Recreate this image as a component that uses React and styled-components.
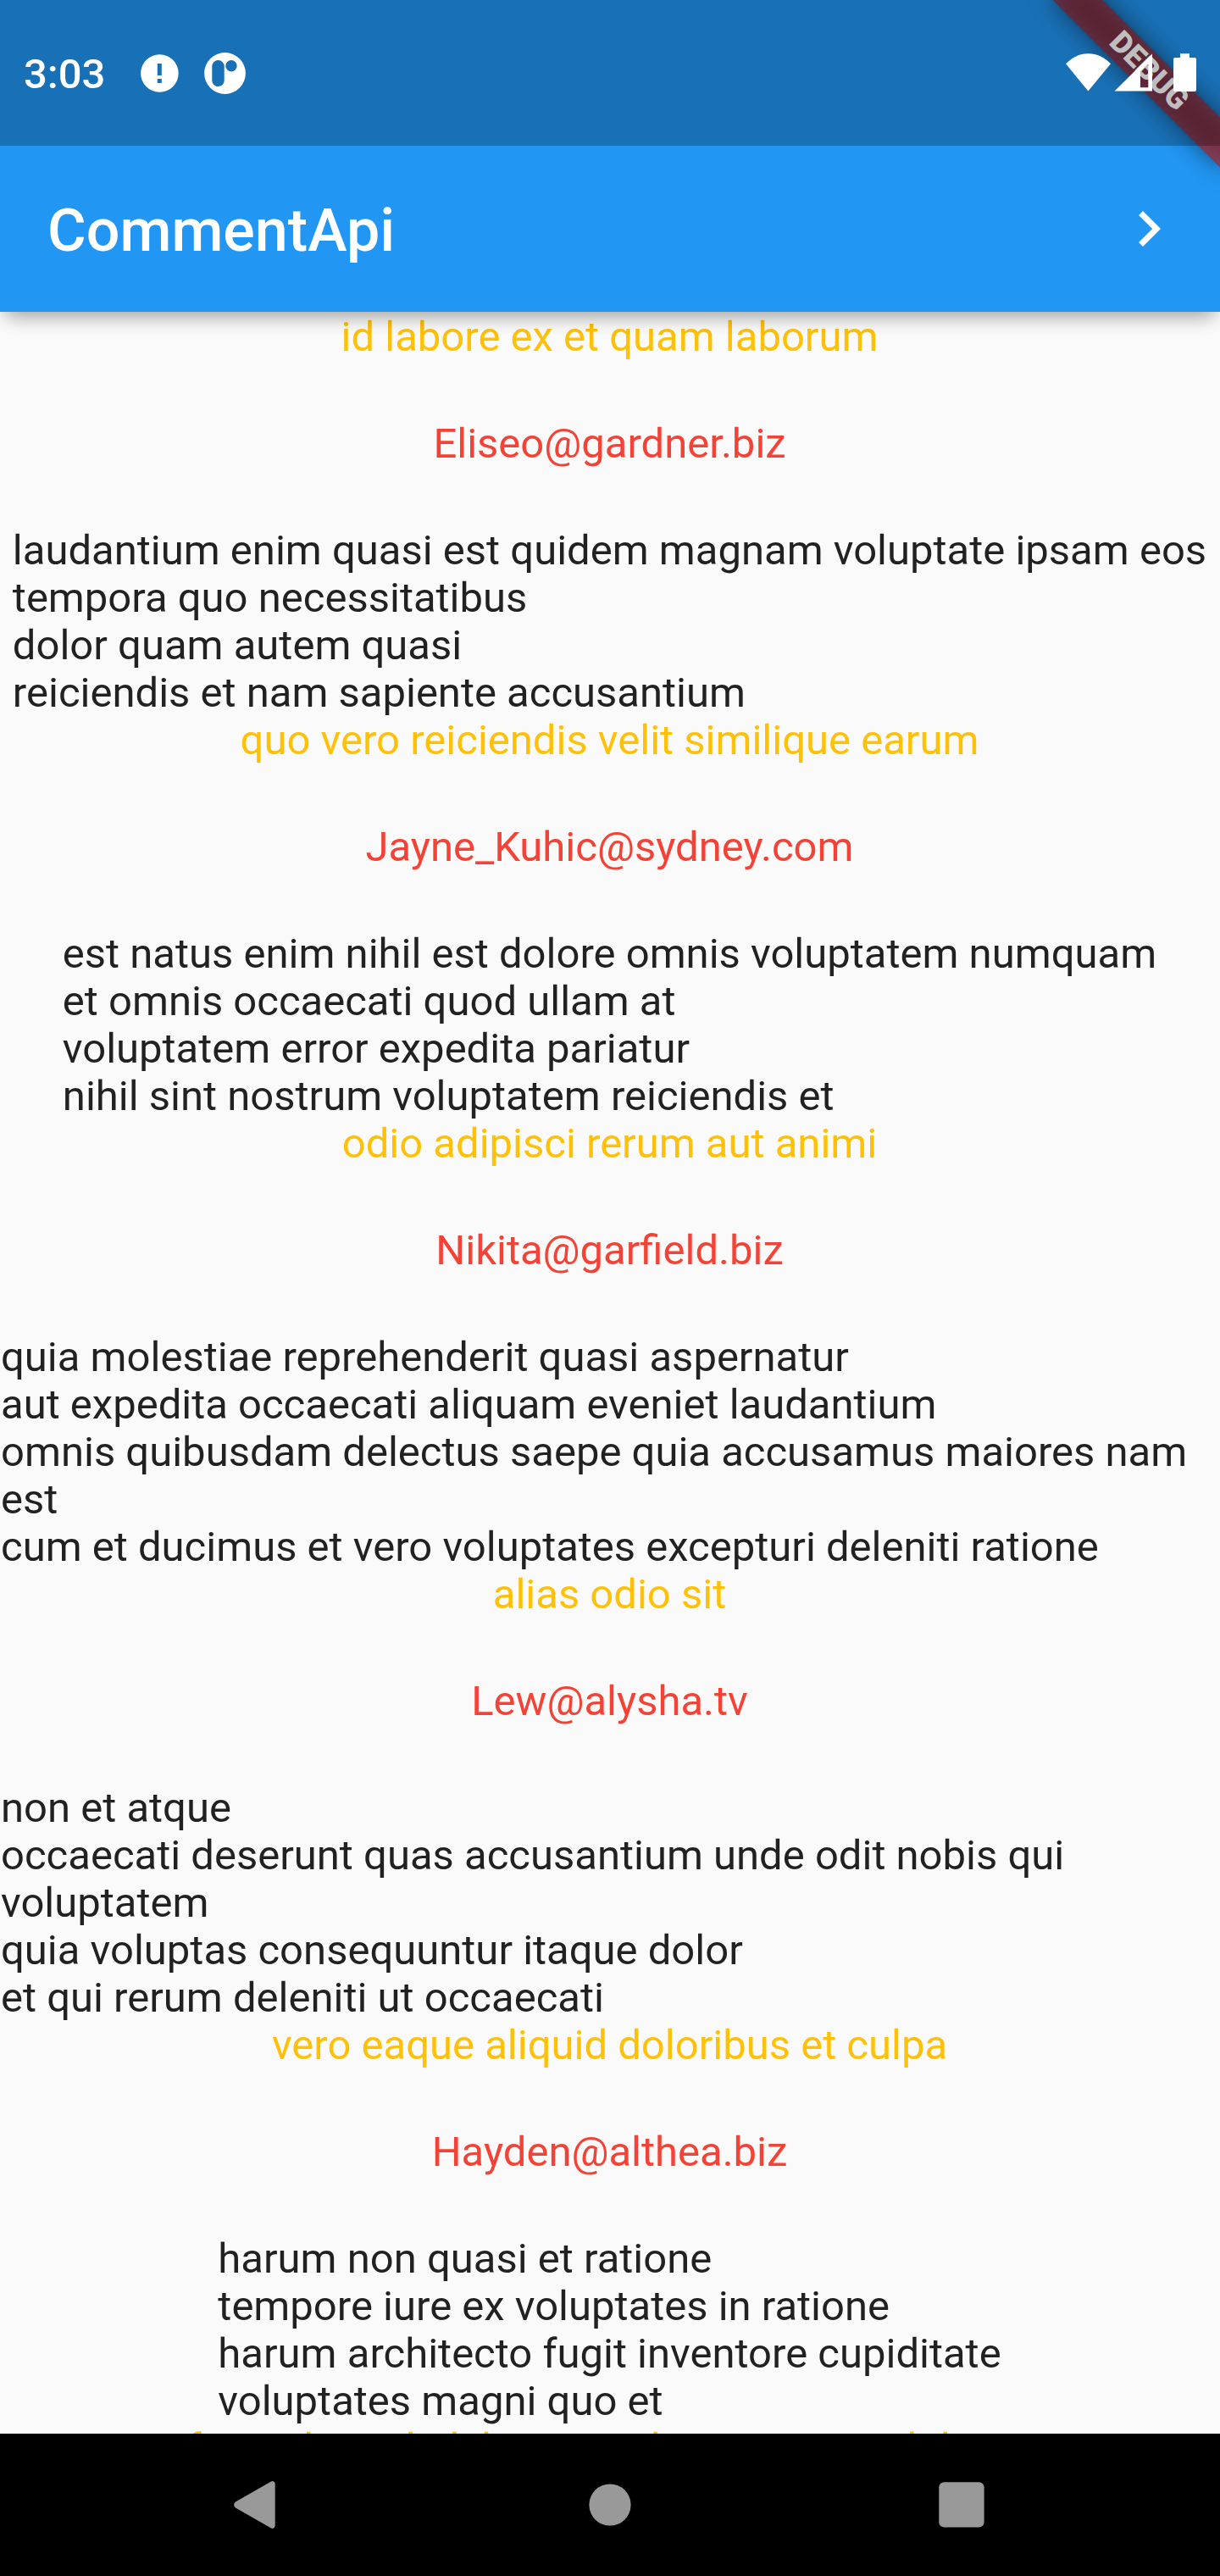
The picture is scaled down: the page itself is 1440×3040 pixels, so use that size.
import React from "react";
import styled, { createGlobalStyle } from "styled-components";

const GlobalStyle = createGlobalStyle`
  body {
    margin: 0;
    background: #fafafa;
    font-family: Roboto, "Liberation Sans", sans-serif;
  }
`;

const Screen = styled.div`
  display: flex;
  flex-direction: column;
  width: 1440px;
  height: 3040px;
  overflow: hidden;
  background: #fafafa;
`;

const Header = styled.header`
  position: relative;
  z-index: 1;
  flex: none;
  background: #2196f3;
  box-shadow: 0 14px 20px -8px rgba(0, 0, 0, 0.22), 0 8px 24px -6px rgba(0, 0, 0, 0.2);
`;

const StatusBar = styled.div`
  position: relative;
  z-index: 2;
  display: flex;
  align-items: center;
  justify-content: space-between;
  box-sizing: border-box;
  height: 172px;
  padding: 0 28px;
  background: rgba(0, 0, 0, 0.251);
  color: #fff;
`;

const StatusGroup = styled.div`
  display: flex;
  align-items: center;
  gap: ${(p) => p.$gap}px;
`;

const Clock = styled.span`
  width: 108px;
  padding-top: 4px;
  font-size: 49px;
  font-weight: 500;
  line-height: 56px;
  white-space: nowrap;
`;

const Glyph = styled.svg`
  display: block;
  flex: none;
`;

const DebugBanner = styled.div`
  position: absolute;
  z-index: 1;
  top: 63.15px;
  right: -55.85px;
  width: 280px;
  height: 42px;
  transform: rotate(45deg);

  &::before {
    content: "";
    position: absolute;
    inset: 0;
    background: rgba(0, 0, 0, 0.5);
    filter: blur(13.9px);
  }
`;

const DebugLabel = styled.div`
  position: relative;
  height: 42px;
  background: rgba(183, 28, 28, 0.627);
  color: #fff;
  font-size: 35.7px;
  font-weight: 900;
  line-height: 40px;
  text-align: center;
`;

const AppBar = styled.div`
  display: flex;
  align-items: center;
  justify-content: space-between;
  height: 196px;
  padding-left: 56px;
  color: #fff;
`;

const Title = styled.h1`
  margin: 0;
  padding-top: 4px;
  font-size: 70px;
  font-weight: 500;
  line-height: 82px;
`;

const IconButton = styled.button`
  display: flex;
  align-items: center;
  justify-content: center;
  width: 168px;
  height: 168px;
  padding: 0;
  border: 0;
  background: none;
  color: inherit;
`;

const CommentList = styled.main`
  flex: 1;
  min-height: 0;
  padding: 2px 1px 0 0;
  overflow: hidden;
  font-size: 49px;
  line-height: 56px;
`;

const Comment = styled.article`
  display: flex;
  flex-direction: column;
  align-items: center;
`;

const Name = styled.div`
  color: #ffc107;
  white-space: nowrap;
`;

const Email = styled.div`
  margin: 70px 0;
  color: #f44336;
`;

const Body = styled.div`
  max-width: 1437px;
  color: rgba(0, 0, 0, 0.87);
  white-space: pre-line;
`;

const NavBar = styled.nav`
  display: grid;
  grid-template-columns: 84px 84px 84px;
  justify-content: center;
  align-items: center;
  column-gap: 331px;
  flex: none;
  height: 168px;
  background: #000;
  color: #999;
`;

const comments = [
  {
    name: "id labore ex et quam laborum",
    email: "Eliseo@gardner.biz",
    body: "laudantium enim quasi est quidem magnam voluptate ipsam eos\ntempora quo necessitatibus\ndolor quam autem quasi\nreiciendis et nam sapiente accusantium",
  },
  {
    name: "quo vero reiciendis velit similique earum",
    email: "Jayne_Kuhic@sydney.com",
    body: "est natus enim nihil est dolore omnis voluptatem numquam\net omnis occaecati quod ullam at\nvoluptatem error expedita pariatur\nnihil sint nostrum voluptatem reiciendis et",
  },
  {
    name: "odio adipisci rerum aut animi",
    email: "Nikita@garfield.biz",
    body: "quia molestiae reprehenderit quasi aspernatur\naut expedita occaecati aliquam eveniet laudantium\nomnis quibusdam delectus saepe quia accusamus maiores nam est\ncum et ducimus et vero voluptates excepturi deleniti ratione",
  },
  {
    name: "alias odio sit",
    email: "Lew@alysha.tv",
    body: "non et atque\noccaecati deserunt quas accusantium unde odit nobis qui voluptatem\nquia voluptas consequuntur itaque dolor\net qui rerum deleniti ut occaecati",
  },
  {
    name: "vero eaque aliquid doloribus et culpa",
    email: "Hayden@althea.biz",
    body: "harum non quasi et ratione\ntempore iure ex voluptates in ratione\nharum architecto fugit inventore cupiditate\nvoluptates magni quo et",
  },
  { name: "et fugit eligendi deleniti quidem qui sint nihil autem" },
];

const AlertIcon = () => (
  <Glyph width="45" height="45" viewBox="0 0 45 45">
    <path
      fill="currentColor"
      fillRule="evenodd"
      d="M22.4 0.2a22.3 22.3 0 1 0 0 44.6a22.3 22.3 0 1 0 0-44.6zM19.8 11h5v14h-5zM19.8 29h5v5h-5z"
    />
  </Glyph>
);

const AppIcon = () => (
  <Glyph width="49" height="49" viewBox="0 0 49 49">
    <path
      fill="currentColor"
      fillRule="evenodd"
      d="M24.5 0.1a24.4 24.4 0 1 0 0 48.8a24.4 24.4 0 1 0 0-48.8zM9.3 16.3a7.2 7.2 0 0 1 14.4 0v16.6a7.2 7.2 0 0 1-14.4 0zM32 9a6.7 6.7 0 1 1 0 13.4a6.7 6.7 0 1 1 0-13.4z"
    />
  </Glyph>
);

const StatusIcons = () => (
  <Glyph width="154" height="46" viewBox="0 0 154 46">
    <g fill="currentColor">
      <path d="M26.4 44.5L0 12.3C7 5 16 0.3 26.4 0.3S46 5 53 12.3z" />
      <path fillRule="evenodd" d="M102 0.5V44.6H57.5zM97.3 12L88 21.3V40.3h9.3z" />
      <path d="M135 0.3h11v4.8h6a2 2 0 0 1 2 2v36a2 2 0 0 1-2 2h-23a2 2 0 0 1-2-2v-36a2 2 0 0 1 2-2h6z" />
    </g>
  </Glyph>
);

export default function App() {
  return (
    <Screen>
      <GlobalStyle />
      <Header>
        <StatusBar>
          <StatusGroup $gap={30}>
            <Clock>3:03</Clock>
            <AlertIcon />
            <AppIcon />
          </StatusGroup>
          <StatusIcons />
        </StatusBar>
        <AppBar>
          <Title>CommentApi</Title>
          <IconButton aria-label="Next">
            <Glyph width="84" height="84" viewBox="0 0 24 24">
              <path fill="currentColor" d="M10 6L8.59 7.41 13.17 12l-4.58 4.59L10 18l6-6z" />
            </Glyph>
          </IconButton>
        </AppBar>
        <DebugBanner>
          <DebugLabel>DEBUG</DebugLabel>
        </DebugBanner>
      </Header>
      <CommentList>
        {comments.map((c) => (
          <Comment key={c.name}>
            <Name>{c.name}</Name>
            {c.email && <Email>{c.email}</Email>}
            {c.body && <Body>{c.body}</Body>}
          </Comment>
        ))}
      </CommentList>
      <NavBar>
        <Glyph width="84" height="84" viewBox="0 0 84 84">
          <path
            fill="currentColor"
            d="M15 38.6L57 14.6a3.1 3.1 0 0 1 4.7 2.6v49.6a3.1 3.1 0 0 1-4.7 2.6L15 45.4a4 4 0 0 1 0-6.8z"
          />
        </Glyph>
        <Glyph width="84" height="84" viewBox="0 0 84 84">
          <circle cx="42" cy="42" r="24.6" fill="currentColor" />
        </Glyph>
        <Glyph width="84" height="84" viewBox="0 0 84 84">
          <rect x="15.3" y="15.2" width="53.3" height="53.3" rx="6" fill="currentColor" />
        </Glyph>
      </NavBar>
    </Screen>
  );
}
